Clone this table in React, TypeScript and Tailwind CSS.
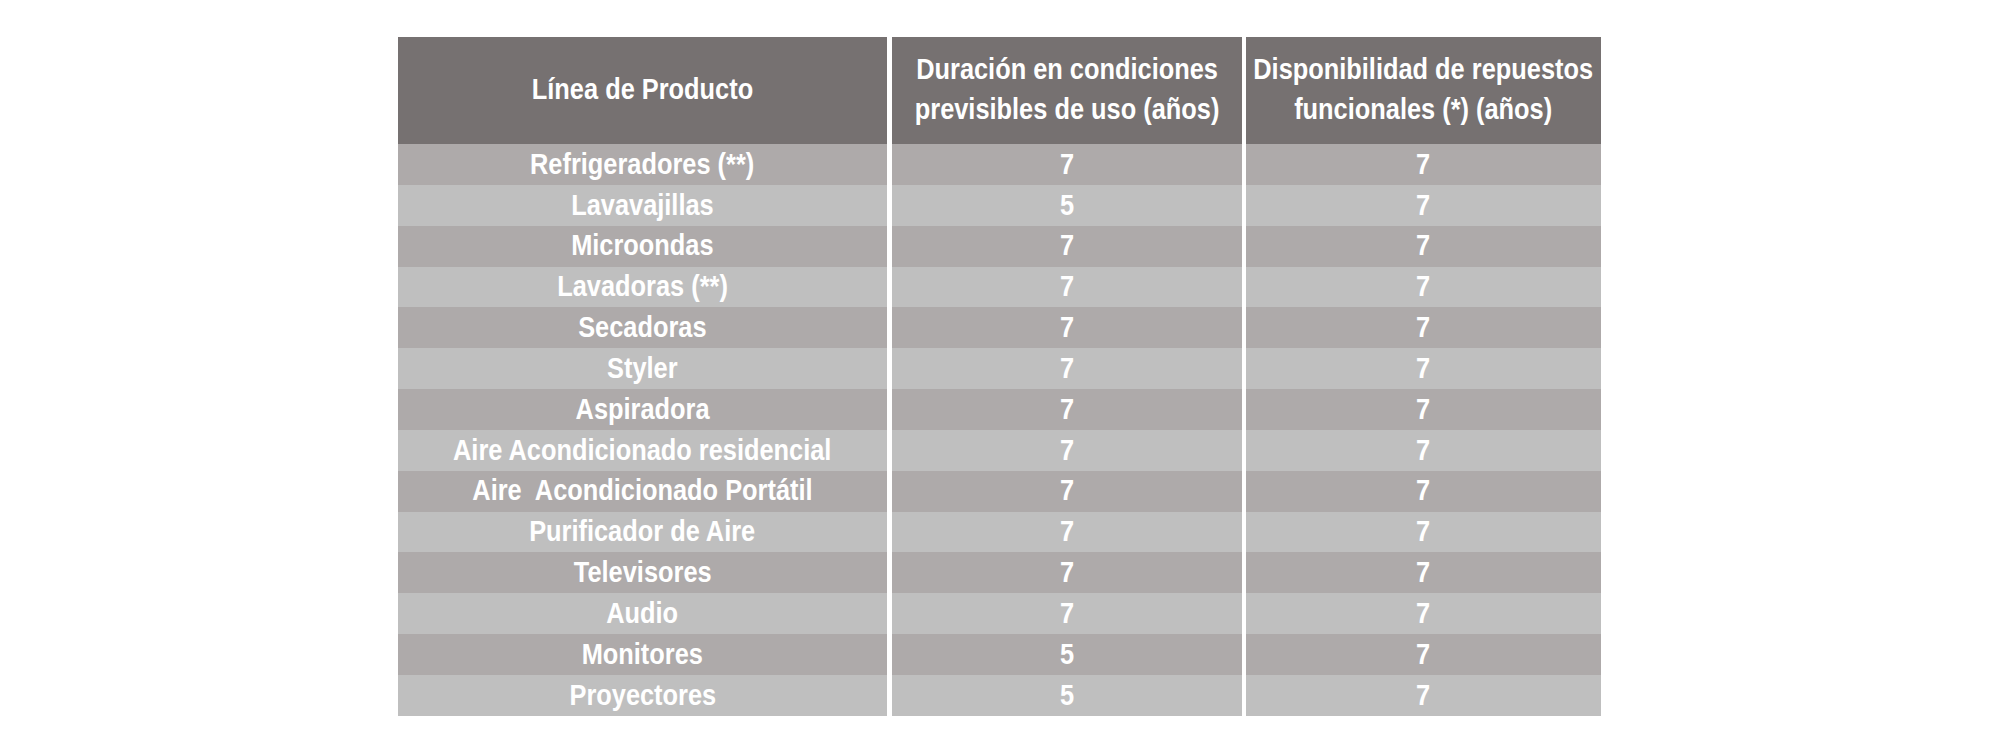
const rows: [string, string, string][] = [
  ['Refrigeradores (**)', '7', '7'],
  ['Lavavajillas', '5', '7'],
  ['Microondas', '7', '7'],
  ['Lavadoras (**)', '7', '7'],
  ['Secadoras', '7', '7'],
  ['Styler', '7', '7'],
  ['Aspiradora', '7', '7'],
  ['Aire Acondicionado residencial', '7', '7'],
  ['Aire  Acondicionado Portátil', '7', '7'],
  ['Purificador de Aire', '7', '7'],
  ['Televisores', '7', '7'],
  ['Audio', '7', '7'],
  ['Monitores', '5', '7'],
  ['Proyectores', '5', '7'],
]

const font = { fontFamily: '"Liberation Sans Narrow", "Liberation Sans", Arial, sans-serif' }

// narrow face is not installed, so squeeze Liberation Sans instead
function Narrow({ children }: { children: React.ReactNode }) {
  return <span className="inline-block scale-x-[0.875] whitespace-pre text-center">{children}</span>
}

export default function App() {
  return (
    <div className="h-[755px] w-[2000px] bg-white pl-[398px] pt-[37px]">
      <div className="w-[1203px] text-[29px] font-bold text-white" style={font}>
        <div className="flex h-[107px] bg-white leading-[40px]">
          <div className="flex w-[489px] items-center justify-center bg-[#767171] pb-[4px]">
            <Narrow>Línea de Producto</Narrow>
          </div>
          <div className="ml-[5px] flex w-[350px] items-center justify-center bg-[#767171] pb-[4px]">
            <Narrow>
              Duración en condiciones
              <br />
              previsibles de uso (años)
            </Narrow>
          </div>
          <div className="ml-[4px] flex w-[355px] items-center justify-center bg-[#767171] pb-[4px]">
            <Narrow>
              Disponibilidad de repuestos
              <br />
              funcionales (*) (años)
            </Narrow>
          </div>
        </div>
        {rows.map(([name, dur, rep], i) => {
          const bg = i % 2 === 0 ? 'bg-[#aeaaaa]' : 'bg-[#bfbfbf]'
          return (
            <div key={i} className="flex h-[40.857px]">
              <div className={`flex w-[489px] items-center justify-center ${bg}`}>
                <Narrow>{name}</Narrow>
              </div>
              <div className={`ml-[5px] flex w-[350px] items-center justify-center ${bg}`}>
                <Narrow>{dur}</Narrow>
              </div>
              <div className={`ml-[4px] flex w-[355px] items-center justify-center ${bg}`}>
                <Narrow>{rep}</Narrow>
              </div>
            </div>
          )
        })}
      </div>
    </div>
  )
}
